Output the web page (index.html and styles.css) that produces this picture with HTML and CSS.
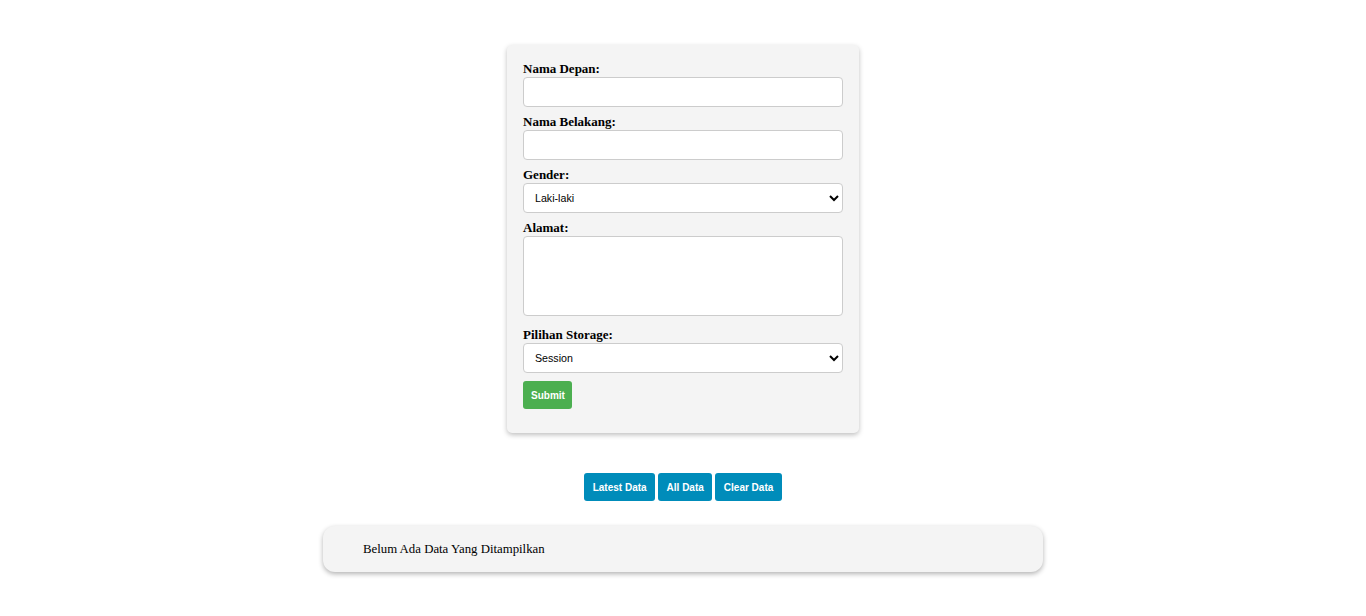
FILE: index.html
```html
<!DOCTYPE html>
<html lang="id">
<head>
<meta charset="utf-8">
<title>Form Storage</title>
<link rel="stylesheet" href="styles.css">
</head>
<body>
<main class="page">
  <form class="form-card">
    <label class="field-label" for="depan">Nama Depan:</label>
    <input class="field" type="text" id="depan">
    <label class="field-label" for="belakang">Nama Belakang:</label>
    <input class="field" type="text" id="belakang">
    <label class="field-label" for="gender">Gender:</label>
    <select class="field select" id="gender">
      <option>Laki-laki</option>
      <option>Perempuan</option>
    </select>
    <label class="field-label" for="alamat">Alamat:</label>
    <textarea class="field textarea" id="alamat"></textarea>
    <label class="field-label" for="storage">Pilihan Storage:</label>
    <select class="field select" id="storage">
      <option>Session</option>
      <option>Local</option>
    </select>
    <button type="button" class="btn btn-submit">Submit</button>
  </form>

  <div class="actions">
    <button type="button" class="btn btn-blue">Latest Data</button>
    <button type="button" class="btn btn-blue">All Data</button>
    <button type="button" class="btn btn-blue">Clear Data</button>
  </div>

  <section class="result-card">
    <p class="result-text">Belum Ada Data Yang Ditampilkan</p>
  </section>
</main>
</body>
</html>
```
FILE: styles.css
```css
* { box-sizing: border-box; }

html, body {
  margin: 0;
  padding: 0;
  background: #ffffff;
  font-family: "Liberation Serif", "Times New Roman", serif;
  color: #000;
}

.page {
  display: flex;
  flex-direction: column;
  align-items: center;
  padding-top: 45px;
  padding-bottom: 20px;
}

.form-card {
  width: 352px;
  padding: 16px 16px 24px;
  background: #f4f4f4;
  border-radius: 5px;
  box-shadow: 0 2px 5px rgba(0, 0, 0, 0.25);
  display: flex;
  flex-direction: column;
  align-items: flex-start;
}

.field-label {
  display: block;
  font-size: 13px;
  font-weight: bold;
  line-height: 16px;
  height: 16px;
}

.field {
  display: block;
  width: 320px;
  height: 30px;
  margin: 0 0 7px;
  border: 1px solid #cccccc;
  border-radius: 4px;
  background: #ffffff;
  font-family: "Liberation Sans", Arial, sans-serif;
  font-size: 10.67px;
  color: #000;
  padding: 0 8px;
}

.select {
  padding: 0 7px;
}

.textarea {
  height: 80px;
  margin-bottom: 11px;
  resize: none;
  padding: 4px 8px;
}

.select + .btn-submit {
  margin-top: 1px;
}

.btn {
  border: none;
  border-radius: 3px;
  height: 28px;
  color: #ffffff;
  font-family: "Liberation Sans", Arial, sans-serif;
  font-weight: bold;
  font-size: 10px;
  cursor: pointer;
}

.btn-submit {
  background: #4caf50;
  padding: 0 8px;
  width: 49px;
}

.actions {
  display: flex;
  gap: 3px;
  margin-top: 40px;
}

.btn-blue {
  background: #008cba;
  padding: 0 8.5px;
}

.result-card {
  margin-top: 25px;
  width: 720px;
  height: 46px;
  padding: 0 40px;
  background: #f4f4f4;
  border-radius: 12px;
  box-shadow: 0 2px 5px rgba(0, 0, 0, 0.3);
  display: flex;
  align-items: center;
}

.result-text {
  margin: 0;
  font-size: 12.8px;
}
```
